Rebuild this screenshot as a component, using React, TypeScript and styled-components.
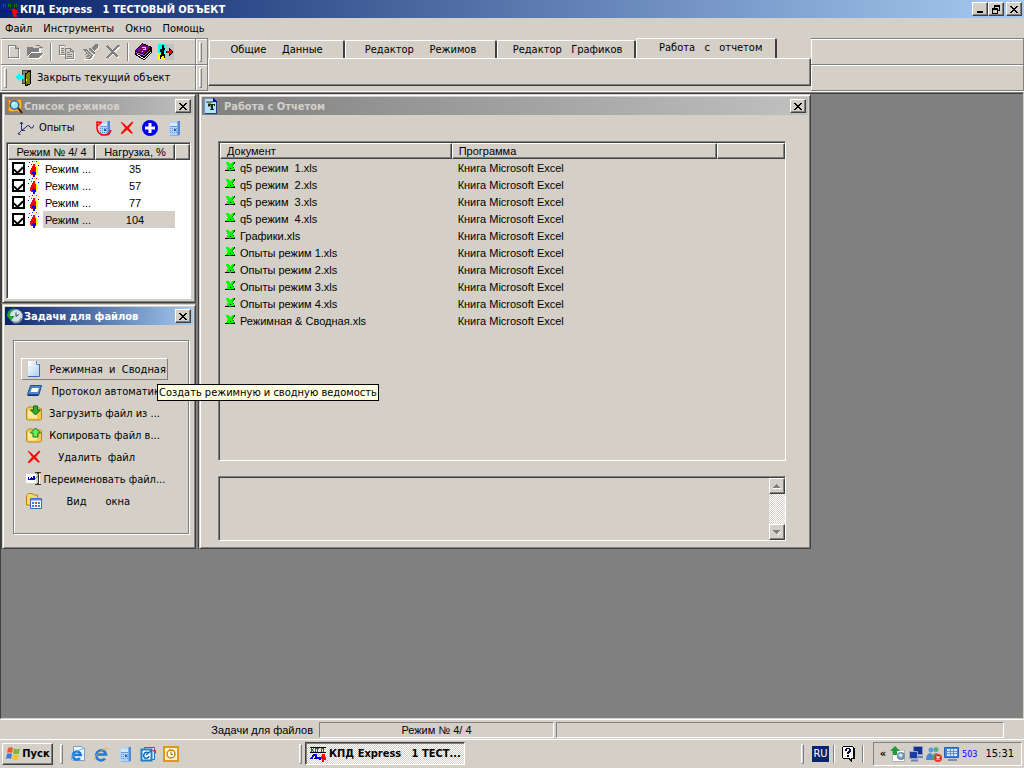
import React from 'react';
import styled, { createGlobalStyle, css } from 'styled-components';

const face = '#d4d0c8';
const shadow = '#808080';
const dark = '#404040';
const ui = '"DejaVu Sans Condensed", "DejaVu Sans", sans-serif';
const list = '"Liberation Sans", Arial, sans-serif';

const Global = createGlobalStyle`
  * { box-sizing: border-box; }
  html, body { margin: 0; height: 100%; }
  body { background: ${face}; font: 11px/16px ${ui}; color: #000; overflow: hidden; }
  button, input, textarea { font: inherit; color: inherit; margin: 0; padding: 0; border: 0; background: none; border-radius: 0; }
  svg { display: block; flex: none; }
  ul { margin: 0; padding: 0; list-style: none; }
`;

const raised = css`
  border: 1px solid;
  border-color: #fff ${dark} ${dark} #fff;
  box-shadow: inset -1px -1px ${shadow};
`;

/* ---------- shell ---------- */
const Shell = styled.div`
  min-height: 100vh;
  display: flex;
  flex-direction: column;
`;
const Caption = styled.header<{ $inactive?: boolean; $gap?: number }>`
  display: flex;
  align-items: center;
  gap: ${p => p.$gap ?? 1}px;
  height: 18px;
  padding: 0 2px;
  font-weight: bold;
  white-space: pre;
  color: ${p => (p.$inactive ? face : '#fff')};
  background: linear-gradient(to right, ${p => (p.$inactive ? '#808080, #c0c0c0' : '#0a246a, #a6caf0')});
`;
const CaptionText = styled.h1`
  flex: 1;
  margin: 0;
  padding-top: 2px;
  font: inherit;
  overflow: hidden;
`;
const CaptionButtons = styled.div`
  display: flex;
`;
const CaptionButton = styled.button<{ $apart?: boolean }>`
  display: grid;
  place-items: center;
  width: 16px;
  height: 14px;
  margin-left: ${p => (p.$apart ? 2 : 0)}px;
  color: #000;
  background: ${face};
  ${raised}
`;
const MenuBar = styled.nav`
  display: flex;
  gap: 11px;
  height: 20px;
  padding: 3px 5px 1px;
`;
const MenuButton = styled.button`
  line-height: 16px;
`;

/* ---------- toolbars ---------- */
const Rebar = styled.div`
  display: flex;
  height: 54px;
  padding-left: 1px;
  border-bottom: 1px solid #fff;
`;
const BandStack = styled.div<{ $width?: number }>`
  display: flex;
  flex-direction: column;
  flex: ${p => (p.$width ? `0 0 ${p.$width}px` : '1 1 0')};
  border-right: 1px solid ${shadow};
  border-bottom: 1px solid ${shadow};
`;
const Band = styled.div<{ $gap?: number; $pad?: number }>`
  display: flex;
  align-items: center;
  flex: 1;
  gap: ${p => p.$gap ?? 0}px;
  padding-left: ${p => p.$pad ?? 0}px;
  border-top: 1px solid ${shadow};
  box-shadow: inset 1px 1px #fff;
`;
const Grip = styled.span`
  flex: none;
  width: 3px;
  height: 20px;
  border: 1px solid;
  border-color: #fff ${shadow} ${shadow} #fff;
`;
const Divider = styled.span`
  width: 2px;
  height: 18px;
  border-left: 1px solid ${shadow};
  border-right: 1px solid #fff;
`;
const ToolButton = styled.button`
  display: flex;
  align-items: center;
  gap: 5px;
  white-space: nowrap;
`;
const TabControl = styled.div`
  flex: 0 1 603px;
  display: flex;
  flex-direction: column;
  height: 48px;
`;
const TabRow = styled.div`
  display: flex;
  align-items: flex-end;
  height: 20px;
  padding: 0 34px 0 1px;
`;
const Tab = styled.button<{ $grow: number; $active?: boolean }>`
  flex: ${p => p.$grow} 1 0;
  height: ${p => (p.$active ? 21 : 18)}px;
  margin-bottom: ${p => (p.$active ? -1 : 0)}px;
  padding-bottom: ${p => (p.$active ? 2 : 0)}px;
  border: solid;
  border-width: 1px 2px 0 1px;
  border-color: #fff ${dark} #fff #fff;
  border-radius: 2px 2px 0 0;
  background: ${face};
  line-height: 14px;
  white-space: pre;
`;
const TabPanel = styled.div`
  flex: 1;
  ${raised}
`;

/* ---------- workspace ---------- */
const Workspace = styled.main`
  flex: 1;
  display: flex;
  align-items: flex-start;
  gap: 3px;
  padding: 1px 0 0 1px;
  background: ${shadow};
  border: 1px solid;
  border-color: ${shadow} ${face} ${face} ${dark};
  box-shadow: inset 0 1px ${dark};
`;
const SideColumn = styled.div`
  flex: 0 0 194px;
  min-width: 0;
  display: flex;
  flex-direction: column;
  gap: 1px;
`;
const Window = styled.section<{ $main?: boolean }>`
  ${p => p.$main && css`flex: 0 1 612px;`}
  min-width: 0;
  padding: 2px;
  background: ${face};
  border: 1px solid;
  border-color: ${face} ${dark} ${dark} ${face};
  box-shadow: inset 1px 1px #fff, inset -1px -1px ${shadow}, -1px 0 ${dark};
`;
const ModeBody = styled.div`
  padding: 0 2px 1px 1px;
`;
const ModeTools = styled.div`
  display: flex;
  align-items: center;
  justify-content: space-between;
  height: 27px;
  padding: 0 9px 2px 11px;
`;
const ModeActions = styled.div`
  display: flex;
  gap: 7px;
`;
const Sunken = styled.div<{ $height: number; $bg?: string }>`
  height: ${p => p.$height}px;
  overflow: hidden;
  background: ${p => p.$bg ?? face};
  border: 1px solid;
  border-color: ${shadow} #fff #fff ${shadow};
  box-shadow: inset 1px 1px ${dark};
  padding: 1px 0 0 1px;
`;
const Table = styled.table`
  width: 100%;
  table-layout: fixed;
  border-collapse: separate;
  border-spacing: 0;
  font-family: ${list};
`;
const Th = styled.th<{ $center?: boolean; $w?: string }>`
  width: ${p => p.$w ?? 'auto'};
  height: 16px;
  padding: 0 6px;
  overflow: hidden;
  font-weight: normal;
  line-height: 14px;
  text-align: ${p => (p.$center ? 'center' : 'left')};
  white-space: nowrap;
  background: ${face};
  ${raised}
`;
const Td = styled.td<{ $center?: boolean; $selected?: boolean }>`
  height: 17px;
  padding: 2px 6px 0;
  line-height: 15px;
  text-align: ${p => (p.$center ? 'center' : 'left')};
  white-space: pre;
  background: ${p => (p.$selected ? face : 'transparent')};
`;
const NameCell = styled.label<{ $gap: number }>`
  display: flex;
  align-items: center;
  gap: ${p => p.$gap}px;
`;
const ModeName = styled.span<{ $selected: boolean }>`
  flex: 1;
  padding: 2px 0 0 2px;
  background: ${p => (p.$selected ? face : 'transparent')};
`;
const ModeCell = styled(Td)`
  padding: 0 0 0 4px;
`;
const FileCell = styled(Td)`
  padding: 2px 5px 0;
`;
const Check = styled.input`
  appearance: none;
  flex: none;
  width: 13px;
  height: 13px;
  border: 2px solid #000;
  background: #fff;
  display: grid;
  place-items: center;
  &:checked::before {
    content: '';
    width: 7px;
    height: 4px;
    border: solid #000;
    border-width: 0 0 2px 2px;
    transform: rotate(-45deg);
  }
`;
const TaskArea = styled.div`
  padding: 15px 4px 12px 8px;
`;
const TaskList = styled.ul`
  height: 194px;
  padding: 17px 20px 0 7px;
  border: 1px solid ${shadow};
  box-shadow: inset 1px 1px #fff, 1px 1px #fff;
`;
const TaskItem = styled.li`
  position: relative;
`;
const TaskButton = styled.button<{ $hot?: boolean }>`
  display: flex;
  align-items: center;
  width: 100%;
  height: 22px;
  padding-left: 4px;
  border: 1px solid transparent;
  ${p => p.$hot && css`border-color: #fff ${shadow} ${shadow} #fff;`}
`;
const TaskLabel = styled.span`
  flex: 1;
  padding-top: 1px;
  text-align: center;
  white-space: pre;
`;
const Tooltip = styled.div`
  position: absolute;
  z-index: 5;
  left: 136px;
  top: 26px;
  height: 17px;
  padding: 0 1px;
  border: 1px solid #000;
  background: #ffffe1;
  line-height: 16px;
  white-space: nowrap;
`;
const ReportBody = styled.div`
  display: flex;
  flex-direction: column;
  gap: 15px;
  padding: 26px 22px 5px 16px;
`;
const Notes = styled.div`
  display: flex;
  height: 65px;
  border: 1px solid;
  border-color: ${shadow} #fff #fff ${shadow};
  box-shadow: inset 1px 1px ${dark};
  padding: 1px 0 0 1px;
`;
const NotesText = styled.textarea`
  flex: 1;
  resize: none;
  overflow: hidden;
  outline: 0;
`;
const checker = css`
  background: repeating-conic-gradient(#fff 0 25%, ${face} 0 50%) 0 0 / 2px 2px;
`;
const ScrollBar = styled.div`
  display: flex;
  flex-direction: column;
  justify-content: space-between;
  width: 16px;
  ${checker}
`;
const ScrollButton = styled.button`
  display: grid;
  place-items: center;
  width: 16px;
  height: 16px;
  background: ${face};
  ${raised}
`;

/* ---------- status bar and taskbar ---------- */
const StatusBar = styled.footer`
  display: flex;
  gap: 2px;
  height: 20px;
  padding: 2px 20px 1px 0;
  border-top: 1px solid #fff;
  font-family: ${list};
`;
const Pane = styled.div<{ $flex: string; $align?: string; $flat?: boolean }>`
  flex: ${p => p.$flex};
  padding-right: ${p => (p.$flat ? 3 : 0)}px;
  text-align: ${p => p.$align ?? 'center'};
  line-height: 15px;
  border: 1px solid;
  border-color: ${p => (p.$flat ? 'transparent' : `${shadow} #fff #fff ${shadow}`)};
`;
const TaskBar = styled.footer`
  display: flex;
  align-items: center;
  height: 29px;
  padding: 0 2px 1px;
  border-top: 1px solid #fff;
`;
const StartButton = styled.button`
  display: flex;
  align-items: center;
  justify-content: center;
  gap: 1px;
  width: 51px;
  height: 22px;
  font-weight: bold;
  ${raised}
`;
const QuickLaunch = styled.div`
  flex: 0 0 246px;
  display: flex;
  align-items: center;
  gap: 7px;
  padding-left: 7px;
`;
const IconButton = styled.button`
  display: grid;
  place-items: center;
`;
const AppButton = styled.button`
  display: flex;
  align-items: center;
  gap: 3px;
  width: 160px;
  height: 23px;
  padding-left: 4px;
  font-weight: bold;
  white-space: pre;
  border: 1px solid;
  border-color: ${dark} #fff #fff ${dark};
  box-shadow: inset 1px 1px ${shadow};
  ${checker}
`;
const RunningApps = styled.div`
  flex: 1;
  display: flex;
  align-items: center;
  gap: 3px;
`;
const LangBox = styled.button`
  width: 17px;
  height: 16px;
  margin: 0 4px 0 8px;
  background: #0a246a;
  color: #fff;
`;
const HelpSlot = styled.div`
  display: flex;
  align-items: center;
  gap: 6px;
  margin-right: 9px;
`;
const Tray = styled.div`
  display: flex;
  align-items: center;
  gap: 2px;
  width: 149px;
  height: 24px;
  padding: 0 7px 0 4px;
  border: 1px solid;
  border-color: ${shadow} #fff #fff ${shadow};
`;
const TrayCount = styled.span`
  color: #00f;
  font-size: 9px;
`;
const Clock = styled.time`
  margin-left: auto;
`;
const Chevron = styled.button`
  width: 10px;
  font-weight: bold;
`;

/* ---------- icons ---------- */
type IconProps = { children: React.ReactNode; w?: number; h?: number; smooth?: boolean };
const Icon = ({ children, w = 16, h = 16, smooth }: IconProps) => (
  <svg width={w} height={h} viewBox={`0 0 ${w} ${h}`} fill="none" shapeRendering={smooth ? 'auto' : 'crispEdges'} aria-hidden="true">
    {children}
  </svg>
);

const CloseGlyph = () => (
  <Icon w={8} h={7}><path d="M0 0h2v1h1v1h2v-1h1v-1h2v1h-1v1h-1v1h-1v1h1v1h1v1h1v1h-2v-1h-1v-1h-2v1h-1v1h-2v-1h1v-1h1v-1h1v-1h-1v-1h-1v-1h-1z" fill="#000" /></Icon>
);
const MinGlyph = () => <Icon w={8} h={8}><path d="M1 6h6v2h-6z" fill="#000" /></Icon>;
const RestoreGlyph = () => (
  <Icon w={8} h={9}><path d="M2 0h6v6h-2v3h-6v-6h2zM3 2v1h3v2h1v-3zM1 5v3h4v-3z" fill="#000" fillRule="evenodd" /></Icon>
);
const AppIcon = () => (
  <Icon w={17}>
    <path d="M1 3h1v3h-1zM3 3h1v1h-1zM3 5h1v1h-1zM6 3h3v1h-3zM6 4h1v2h-1zM8 4h1v2h-1zM12 3h1v3h-1zM14 3h1v3h-1z" fill="#008000" />
    <path d="M1 10h2v-1h2v1h2v1h2v-1h2" stroke="#00f" />
    <path d="M10 8h3v1h2v2h1v1h-2v2h1v2h-3v-1h-1v-3h-1z" fill="#f00" />
  </Icon>
);
const TaskAppIcon = () => (
  <Icon>
    <path d="M0 1.500h16M0 6.500h16" stroke="#000" />
    <path d="M1 2h1v4h-1zM3 2h1v1h-1zM2 3h1v2h-1zM3 5h1v1h-1zM5 2h4v1h-1v3h-1v-3h-1v3h-1zM11 2h3v4h-1v-3h-1v3h-1z" fill="#008000" />
    <path d="M1 13l3-4h2v3h5l2-2" stroke="#00f" strokeWidth="2" />
    <path d="M12 8h3v3h1v3h-2v2h-2v-3h-1v-3h1z" fill="#f00" />
    <path d="M4 12.500h2M9 13.500h2" stroke="#000" />
  </Icon>
);
const NewIcon = () => (
  <Icon w={14} h={16}>
    <path d="M2.500 2.500h7l3 3v9h-10z" stroke="#fff" />
    <path d="M1.500 1.500h7l3 3v9h-10zM8.500 1.500v3h3" stroke="#808080" />
  </Icon>
);
const OpenIcon = () => (
  <Icon w={17}>
    <path d="M1 4h5l1 1h7v4h3l-4 6h-12z" fill="#fff" />
    <path d="M0 3h5l1 1h6v4h-8l-4 5zM1 14l3-5h12l-4 5z" fill="#808080" />
    <path d="M9 1.500h4M13.500 2v2M12 3.500h4" stroke="#808080" />
  </Icon>
);
const CopyIcon = () => (
  <Icon w={17}>
    <path d="M2.500 2.500h5l2 2v7h-7zM8.500 5.500h5l3 3v7h-8z" stroke="#fff" />
    <path d="M7 4h6l3 3v8h-9z" fill={face} />
    <path d="M6.500 10.500h-5v-9h5l2 2M7.500 4.500h5l3 3v7h-8zM12.500 4.500v3h3M3 4.500h3M3 6.500h3M3 8.500h3M9 8.500h3M9 10.500h5M9 12.500h5" stroke="#808080" />
  </Icon>
);
const BrushIcon = () => (
  <Icon w={18}>
    <path d="M17 3l-5 5 1 3-3 4-7 1" stroke="#fff" strokeWidth="2" />
    <path d="M15 0h2v3l-4 4-3-3z" fill="#808080" />
    <path d="M9 4l5 5-1 2-6-6z" fill="#808080" />
    <path d="M1 5h4l2 1 5 5-2 4h-6l1-1h3l1-2-3 1h-2l3-2-1-1-2 1 1-2z" fill="#808080" />
    <path d="M7 6l5 5M5 7l5 5" stroke="#d4d0c8" />
  </Icon>
);
const GreyX = () => (
  <Icon>
    <path d="M3 3l11 11M14 3l-11 11" stroke="#fff" strokeWidth="2" />
    <path d="M2 2l11 11M14 1l-12 13" stroke="#808080" strokeWidth="2" />
  </Icon>
);
const BookIcon = () => (
  <Icon w={17} h={17}>
    <path d="M7 0l10 4v5l-8 8-9-5v-4z" fill="#000" />
    <path d="M7 1l8 3-6 7-8-3z" fill="#800080" />
    <path d="M2 11l7 4 7-7v1l-7 7-7-4z" fill="#fff" />
    <path d="M1 9l8 3 6-6v1l-6 6-8-3z" fill="#c060c0" />
    <path d="M7 4h3v2h-2v1" stroke="#ff0" /><path d="M7 8h1v1h-1z" fill="#ff0" />
  </Icon>
);
const RunIcon = () => (
  <Icon>
    <path d="M0 0h7v9h-7z" fill="#0ff" /><path d="M0 9h7v7h-7z" fill="#ff0" /><path d="M7 0h9v16h-9z" fill="#c0c0c0" />
    <path d="M4 1h2v3h1v2h-1v4h1v4h-1v-2h-2v1h-1v2h-1v-4h1v-3h-1v-3h2z" fill="#000" />
    <path d="M8 7h3v-3h1v1h1v1h1v1h1v2h-1v1h-1v1h-1v1h-1v-3h-3z" fill="#000" />
    <path d="M9 7h3v-1h1v1h1v2h-1v1h-1v-1h-3z" fill="#f00" />
  </Icon>
);
const DoorIcon = () => (
  <Icon w={17}>
    <path d="M7 0h9v14h-9z" fill="#404040" /><path d="M8 1h4v12h-4z" fill="#808080" />
    <path d="M10 4l5-3v13l-5 2z" fill="#808000" stroke="#000" /><path d="M11 9h1v2h-1z" fill="#ff0" />
    <path d="M0 7h1v-1h1v-1h1v-1h1v-1h1v2h4v4h-4v2h-1v-1h-1v-1h-1v-1h-1v-1h-1z" fill="#0ff" />
  </Icon>
);
const SearchIcon = () => (
  <Icon smooth>
    <path d="M1 1l3 2 3-2 2 1 5-1 1 6-2 8-3-2-4 1-5-1 1-5z" fill="#ffb52e" stroke="#d47a10" />
    <circle cx="7.500" cy="7" r="4.200" fill="#9ee6ff" stroke="#2d6da0" strokeWidth="1.500" />
    <path d="M11 10l4 5" stroke="#222" strokeWidth="2" /><path d="M5.500 6.500l2-2" stroke="#fff" strokeWidth="1.500" />
  </Icon>
);
const CurveIcon = () => (
  <Icon w={17} h={14} smooth>
    <path d="M4.500 1v8.500L1 13M4.500 9.500H8M5 9l3-2 2-2 2-.5 1.500 2.500h2L17 4M3 3l1.500-2L6 3M2 11.500L1 13l2.500.5" stroke="#20307a" />
  </Icon>
);
const ServerIcon = ({ refresh = false }: { refresh?: boolean }) => (
  <Icon w={17}>
    <path d="M5 1h9v14l-1 1h-8l-1-1z" fill="#7fb0f0" />
    <path d="M4 1h8v14h-8z" fill="#b4d4fc" />
    <path d="M13 1h2v14h-2z" fill="#5486d4" />
    <path d="M5 3h7v3h-7z" fill="#d6e8fc" /><path d="M5 6h7v1h-7z" fill="#6898dc" />
    <path d="M5 8.500h7M5 10.500h7M5 12.500h7" stroke="#5a8cd8" strokeDasharray="1 1" />
    <path d="M9 9h2v2h-2z" fill="#2c5cb8" />
    {refresh && <path d="M7 2.500L2 2v6c0 4 3 7 7 7s6-2 7-5M2 6l4-3" stroke="#f00" strokeWidth="1.500" shapeRendering="auto" />}
  </Icon>
);
const RedX = () => (
  <Icon smooth><path d="M2 2l3 2 3 3 5-5 1 .5L9.500 8l4 5-.8.600L8 9.500 3 14l-1-.8L6.500 8z" fill="#f00" stroke="#f00" strokeWidth=".7" /></Icon>
);
const PlusIcon = () => (
  <Icon smooth><circle cx="8" cy="8" r="8" fill="#00e" /><path d="M8 3v10M3 8h10" stroke="#fff" strokeWidth="3" /></Icon>
);
const FlameIcon = () => (
  <Icon w={12}>
    <path d="M7 2h1v3h1v2h1v5h-1v2h-2v-5h-2z" fill="#ff0" />
    <path d="M5 3h2v3h1v7h-1v1h-4v-1h-1v-4h1v-2h1v-2h1z" fill="#f00" />
    <path d="M5 9h1v2h2v3h-1v2h-2v-3h-1v-2h1z" fill="#00f" />
    <path d="M1 1h1v1h-1zM8 0h1v1h-1zM3 3h1v1h-1z" fill="#f00" /><path d="M10 4h1v1h-1zM4 0h1v1h-1zM0 5h1v1h-1z" fill="#00f" /><path d="M10 1h1v1h-1zM6 0h1v1h-1z" fill="#fc0" />
  </Icon>
);
const ClockGreen = () => (
  <Icon smooth>
    <circle cx="9" cy="8" r="6.500" fill="#d4e2ee" stroke="#8098a8" /><path d="M9 4.500v4l3-2" stroke="#345" />
    <path d="M0 8h2.500c0-3 2-6 6-7-5-1-8 2-8.500 7z" fill="#22a52e" /><path d="M0 8l4 5 3.500-5z" fill="#22a52e" />
    <path d="M6 14c4 1 8 0 8-4" stroke="#8a98a0" strokeWidth="2" />
  </Icon>
);
const ReportIcon = () => (
  <Icon w={13}>
    <path d="M.5.5h9l3 3v12h-12z" fill="#b8e0ff" stroke="#6a94c8" /><path d="M9 0l4 4h-4z" fill="#0000a0" />
    <path d="M12 4h1v12h-12v-1h11z" fill="#1c3c90" />
    <path d="M2 3h7v2h-2v4h-3v-4h-2z" fill="#808080" /><path d="M4 6h7v2h-1v-1h-1v4h1v1h-4v-1h1v-4h-1v1h-2z" fill="#003800" />
  </Icon>
);
const ExcelIcon = () => (
  <Icon w={11} h={13}>
    <path d="M2 1h2v1h1v1h1v-1h1v-1h2v-1h1v2h-1v1h-1v2h1v2h1v2h-10v-1h2v-2h1v-2h-1v-2h-1z" fill="#008000" />
    <path d="M1 0h3v1h1v1h1v-1h1v-1h2v1h-1v2h-1v1h1v2h1v2h-8v-1h1v-2h1v-1h-1v-2h-1z" fill="#0f0" />
    <path d="M0 8.500h4M6 8.500h4M5 6.500h1M9 .5h1" stroke="#000" />
  </Icon>
);
const PageIcon = () => (
  <Icon smooth>
    <defs><linearGradient id="page" x2="1" y2="1"><stop stopColor="#fff" /><stop offset="1" stopColor="#a9cdf5" /></linearGradient></defs>
    <path d="M2 0h9l3 3v12.500h-12z" fill="url(#page)" /><path d="M10.500 0v3.500h3.500" fill="#dceaff" stroke="#5a86c8" /><path d="M2 15.500h11.500v-12" stroke="#3c6cb4" />
  </Icon>
);
const ProtocolIcon = () => (
  <Icon smooth>
    <path d="M4.500 2.500h11l-2.500 9h-11.500z" fill="#4e83c8" stroke="#1e4f98" /><path d="M6 5h7l-1.500 4h-7z" fill="#fff" /><path d="M1.500 12.500h11" stroke="#102f70" />
  </Icon>
);
const FolderIcon = ({ up = false }: { up?: boolean }) => (
  <Icon smooth>
    <path d="M.5 4l2-2h4l1 1h7l1 1v10l-1 1h-13l-1-1z" fill="#f5c94c" stroke="#b8861c" /><path d="M2 5.500h9v8h-9z" fill="#ffe99a" />
    {up
      ? <path d="M9.500 1l5 5h-2.500v4h-5v-4h-2.500z" fill="#6fe860" stroke="#0a7a10" />
      : <path d="M7.500 1h4v4h3l-5 5-5-5h3z" fill="#3aa835" stroke="#0a6a10" />}
  </Icon>
);
const RenameIcon = () => (
  <Icon>
    <path d="M0 3h10v9h-10z" fill="#fff" /><path d="M2 6h1v2h1v-1h1v-1h1v1h1v-2h2v4h-7z" fill="#00c" />
    <path d="M9 1.500h2l1 1 1-1h2M9 13.500h2l1-1 1 1h2M12 2v11" stroke="#303030" /><path d="M13.500 3v10" stroke="#fff" /><path d="M9 8l3-3" stroke="#808080" />
  </Icon>
);
const ViewIcon = () => (
  <Icon smooth>
    <path d="M.5 2.500l2-2h4l1 1.500h4v10h-11z" fill="#ffd66a" stroke="#b08020" /><path d="M4.500 5.500h11v10h-11z" fill="#fff" stroke="#3465c0" />
    <path d="M5 6.500h10" stroke="#4e87e8" strokeWidth="2" /><path d="M7 9v6M13 9v6" stroke="#4a7bd0" strokeWidth="2" strokeDasharray="2 1" /><path d="M10 9v6" stroke="#e05020" strokeWidth="2" strokeDasharray="2 1" />
  </Icon>
);
const Arrow = ({ down = false }: { down?: boolean }) => (
  <Icon w={8} h={5}>
    <path d={down ? 'M8 1l-4 4h1l3-3z' : 'M0 4h8v1h-8z'} fill="#fff" />
    <path d={down ? 'M0 0h7v1h-1v1h-1v1h-1v1h-1v-1h-1v-1h-1v-1h-1z' : 'M3 0h1v1h1v1h1v1h1v1h-7v-1h1v-1h1v-1h1z'} fill="#808080" />
  </Icon>
);
const WinFlag = () => (
  <Icon smooth>
    <path d="M3 2c2-1 3-1 5 0l-1 5c-2-1-3-1-5 0z" fill="#f0582a" /><path d="M9 2.500c2 1 4 1 6 0l-1 5c-2 1-4 1-6 0z" fill="#7cb83a" />
    <path d="M2 8c2-1 3-1 5 0l-1 5c-2-1-3-1-5 0z" fill="#3f78e0" /><path d="M8 8.500c2 1 4 1 6 0l-1 5c-2 1-4 1-6 0z" fill="#f8c02c" />
  </Icon>
);
const IeIcon = ({ page = false }: { page?: boolean }) => (
  <Icon smooth>
    {page && <path d="M3.500.5h8l3 3v11h-11z" fill="#f0f6ff" stroke="#7a9ccc" />}
    <path d={page ? 'M10 12a4 4 0 1 1 .8-3H4' : 'M12 12.500a5 5 0 1 1 1-4H4'} stroke="#1f7bd8" strokeWidth="2.500" />
    <path d="M2 14.500c-3-2 6-12 13-12" stroke={page ? '#58a8f0' : '#e8b830'} />
  </Icon>
);
const OutlookExpress = () => (
  <Icon smooth>
    <path d="M4.500 1.500h10v12h-10z" fill="#dff0ff" stroke="#1c70b8" /><path d="M1.500 3.500h10v11h-10z" fill="#fff" stroke="#1c80c8" strokeWidth="2" />
    <path d="M9 7c-4-2-6 1-5 4 2 3 5 0 5-1M6 9l6-5" stroke="#1468b8" strokeWidth="1.500" /><path d="M12 4h4v4z" fill="#d83820" />
  </Icon>
);
const OutlookIcon = () => (
  <Icon smooth>
    <path d="M1 1h14v14h-14z" fill="#fff2cc" stroke="#e09818" strokeWidth="2" /><circle cx="8" cy="8" r="4" fill="#fff" stroke="#c88010" strokeWidth="1.500" /><path d="M8 5.500v3h2" stroke="#a06000" />
  </Icon>
);
const HelpIcon = () => (
  <Icon w={15}>
    <path d="M2 0h10v1h1v12h-2v3h-1v-1h-1v-1h-1v-1h-6v-1h-1v-11h1z" fill="#000" />
    <path d="M2 1h10v11h-2v2l-2-2h-6z" fill="#fffff0" />
    <path d="M13 2h1v11h-2v-1h1z" fill="#000" />
    <path d="M4 3h1v-1h4v1h1v3h-1v1h-1v1h-2v-2h1v-1h1v-2h-2v2h-2zM6 9h2v2h-2z" fill="#000060" />
  </Icon>
);
const UpdateIcon = () => (
  <Icon smooth><path d="M2.500 4h12v11.500h-12z" fill="#fff" stroke="#b0b0b0" /><path d="M5 0l5 5h-3v4h-4v-4h-3z" fill="#1c9a34" /><circle cx="11" cy="10" r="4" fill="#6a90b0" /><path d="M8 9l3-2 2 2-2 3z" fill="#cde4f0" /></Icon>
);
const NetIcon = () => (
  <Icon smooth><path d="M5.500.5h9v8h-9z" fill="#16318c" stroke="#8494c8" /><path d="M1.500 5.500h8v7h-8z" fill="#1c3ca0" stroke="#9aa8d8" /><path d="M3 14.500h7M10 11h5" stroke="#7080b0" strokeWidth="2" /></Icon>
);
const MessengerIcon = () => (
  <Icon smooth><circle cx="5" cy="4" r="2.500" fill="#5a9ae0" /><path d="M0 14c0-9 8-9 8 0z" fill="#4a88d0" /><circle cx="10" cy="3.500" r="2.500" fill="#58b080" /><path d="M6 13c0-8 8-8 9 0z" fill="#4aa878" /><circle cx="12" cy="12" r="4" fill="#e03828" /><path d="M10.500 10.500l3 3M13.500 10.500l-3 3" stroke="#fff" strokeWidth="1.300" /></Icon>
);
const ScreenIcon = () => (
  <Icon smooth><path d="M.5 1.500h14v10h-14z" fill="#3f88e8" stroke="#2a5cb0" /><path d="M3 3h10v7h-10z" fill="#d6e8ff" /><path d="M3 5.500h10M3 7.500h10M6.500 3v7M9.500 3v7" stroke="#5a94e0" /><path d="M4 14h9" stroke="#7890b0" strokeWidth="2" /></Icon>
);

/* ---------- data ---------- */
const modes = ['35', '57', '77', '104'];
const files = [
  'q5 режим  1.xls', 'q5 режим  2.xls', 'q5 режим  3.xls', 'q5 режим  4.xls', 'Графики.xls',
  'Опыты режим 1.xls', 'Опыты режим 2.xls', 'Опыты режим 3.xls', 'Опыты режим 4.xls', 'Режимная & Сводная.xls',
];
const tasks = [
  { icon: <PageIcon />, label: '  Режимная  и  Сводная', tip: 'Создать режимную и сводную ведомость' },
  { icon: <ProtocolIcon />, label: '   Протокол автоматик...' },
  { icon: <FolderIcon />, label: 'Загрузить файл из ...' },
  { icon: <FolderIcon up />, label: 'Копировать файл в...' },
  { icon: <RedX />, label: 'Удалить  файл     ' },
  { icon: <RenameIcon />, label: 'Переименовать файл...' },
  { icon: <ViewIcon />, label: 'Вид      окна    ' },
];
const tabs = [
  { label: 'Общие     Данные', grow: 136 },
  { label: 'Редактор     Режимов', grow: 152 },
  { label: ' Редактор   Графиков', grow: 139 },
  { label: '   Работа   с   отчетом', grow: 141, active: true },
];

const Close = ({ apart }: { apart?: boolean }) => (
  <CaptionButton $apart={apart} aria-label="Закрыть"><CloseGlyph /></CaptionButton>
);

export default function App() {
  return (
    <>
      <Global />
      <Shell>
        <Caption>
          <AppIcon />
          <CaptionText>КПД Express   1 ТЕСТОВЫЙ ОБЪЕКТ</CaptionText>
          <CaptionButtons>
            <CaptionButton aria-label="Свернуть"><MinGlyph /></CaptionButton>
            <CaptionButton aria-label="Восстановить"><RestoreGlyph /></CaptionButton>
            <Close apart />
          </CaptionButtons>
        </Caption>
        <MenuBar>
          {['Файл', 'Инструменты', 'Окно', 'Помощь'].map(m => <MenuButton key={m}>{m}</MenuButton>)}
        </MenuBar>

        <Rebar>
          <BandStack $width={195}>
            <Band $gap={6} $pad={6}>
              <ToolButton aria-label="Создать"><NewIcon /></ToolButton>
              <ToolButton aria-label="Открыть"><OpenIcon /></ToolButton>
              <Divider />
              <ToolButton aria-label="Копировать"><CopyIcon /></ToolButton>
              <ToolButton aria-label="Формат"><BrushIcon /></ToolButton>
              <ToolButton aria-label="Удалить"><GreyX /></ToolButton>
              <Divider />
              <ToolButton aria-label="Справка"><BookIcon /></ToolButton>
              <ToolButton aria-label="Выход"><RunIcon /></ToolButton>
            </Band>
            <Band $gap={8} $pad={3}>
              <Grip />
              <ToolButton><DoorIcon />Закрыть текущий объект</ToolButton>
            </Band>
          </BandStack>
          <BandStack $width={12}>
            <Band $pad={3}><Grip /></Band>
            <Band $pad={3}><Grip /></Band>
          </BandStack>
          <TabControl>
            <TabRow role="tablist">
              {tabs.map(t => (
                <Tab key={t.label} role="tab" aria-selected={!!t.active} $grow={t.grow} $active={t.active}>{t.label}</Tab>
              ))}
            </TabRow>
            <TabPanel role="tabpanel" />
          </TabControl>
          <BandStack>
            <Band />
            <Band />
          </BandStack>
        </Rebar>

        <Workspace>
          <SideColumn>
            <Window>
              <Caption $inactive>
                <SearchIcon />
                <CaptionText as="h2">Список режимов</CaptionText>
                <Close />
              </Caption>
              <ModeBody>
                <ModeTools>
                  <ToolButton><CurveIcon />Опыты</ToolButton>
                  <ModeActions>
                    <ToolButton aria-label="Обновить"><ServerIcon refresh /></ToolButton>
                    <ToolButton aria-label="Удалить режим"><RedX /></ToolButton>
                    <ToolButton aria-label="Добавить режим"><PlusIcon /></ToolButton>
                    <ToolButton aria-label="Расчет"><ServerIcon /></ToolButton>
                  </ModeActions>
                </ModeTools>
                <Sunken $height={157} $bg="#fff">
                  <Table>
                    <thead>
                      <tr><Th $w="87px" $center>Режим № 4/ 4</Th><Th $w="80px" $center>Нагрузка, %</Th><Th aria-label="Пусто" /></tr>
                    </thead>
                    <tbody>
                      {modes.map((load, i) => (
                        <tr key={load}>
                          <ModeCell>
                            <NameCell $gap={3}>
                              <Check type="checkbox" defaultChecked />
                              <FlameIcon />
                              <ModeName $selected={i === 3}>Режим ...</ModeName>
                            </NameCell>
                          </ModeCell>
                          <Td $center $selected={i === 3}>{load}</Td>
                          <Td />
                        </tr>
                      ))}
                    </tbody>
                  </Table>
                </Sunken>
              </ModeBody>
            </Window>
            <Window>
              <Caption>
                <ClockGreen />
                <CaptionText as="h2">Задачи для файлов</CaptionText>
                <Close />
              </Caption>
              <TaskArea>
                <TaskList>
                  {tasks.map(t => (
                    <TaskItem key={t.label}>
                      <TaskButton $hot={!!t.tip}>{t.icon}<TaskLabel>{t.label}</TaskLabel></TaskButton>
                      {t.tip && <Tooltip role="tooltip">{t.tip}</Tooltip>}
                    </TaskItem>
                  ))}
                </TaskList>
              </TaskArea>
            </Window>
          </SideColumn>

          <Window $main>
            <Caption $inactive $gap={7}>
              <ReportIcon />
              <CaptionText as="h2">Работа с Отчетом</CaptionText>
              <Close />
            </Caption>
            <ReportBody>
              <Sunken $height={320}>
                <Table>
                  <thead>
                    <tr><Th $w="41%">Документ</Th><Th $w="47%">Программа</Th><Th aria-label="Пусто" /></tr>
                  </thead>
                  <tbody>
                    {files.map(f => (
                      <tr key={f}>
                        <FileCell><NameCell as="div" $gap={4}><ExcelIcon />{f}</NameCell></FileCell>
                        <Td>Книга Microsoft Excel</Td>
                        <Td />
                      </tr>
                    ))}
                  </tbody>
                </Table>
              </Sunken>
              <Notes>
                <NotesText aria-label="Примечание" />
                <ScrollBar>
                  <ScrollButton aria-label="Вверх"><Arrow /></ScrollButton>
                  <ScrollButton aria-label="Вниз"><Arrow down /></ScrollButton>
                </ScrollBar>
              </Notes>
            </ReportBody>
          </Window>
        </Workspace>

        <StatusBar>
          <Pane $flex="0 0 317px" $align="right" $flat>Задачи для файлов</Pane>
          <Pane $flex="0 0 235px">Режим № 4/ 4</Pane>
          <Pane $flex="1" />
        </StatusBar>
        <TaskBar>
          <StartButton><WinFlag />Пуск</StartButton>
          <QuickLaunch>
            <Grip />
            <IconButton aria-label="Документ"><IeIcon page /></IconButton>
            <IconButton aria-label="Internet Explorer"><IeIcon /></IconButton>
            <IconButton aria-label="Калькулятор"><ServerIcon /></IconButton>
            <IconButton aria-label="Outlook Express"><OutlookExpress /></IconButton>
            <IconButton aria-label="Outlook"><OutlookIcon /></IconButton>
          </QuickLaunch>
          <RunningApps>
            <Grip />
            <AppButton><TaskAppIcon />КПД Express   1 ТЕСТ...</AppButton>
          </RunningApps>
          <Grip />
          <LangBox>RU</LangBox>
          <HelpSlot>
            <Divider />
            <IconButton aria-label="Справка"><HelpIcon /></IconButton>
            <Divider />
          </HelpSlot>
          <Tray>
            <Chevron aria-label="Показать значки">«</Chevron>
            <UpdateIcon />
            <NetIcon />
            <MessengerIcon />
            <ScreenIcon />
            <TrayCount>503</TrayCount>
            <Clock>15:31</Clock>
          </Tray>
        </TaskBar>
      </Shell>
    </>
  );
}
